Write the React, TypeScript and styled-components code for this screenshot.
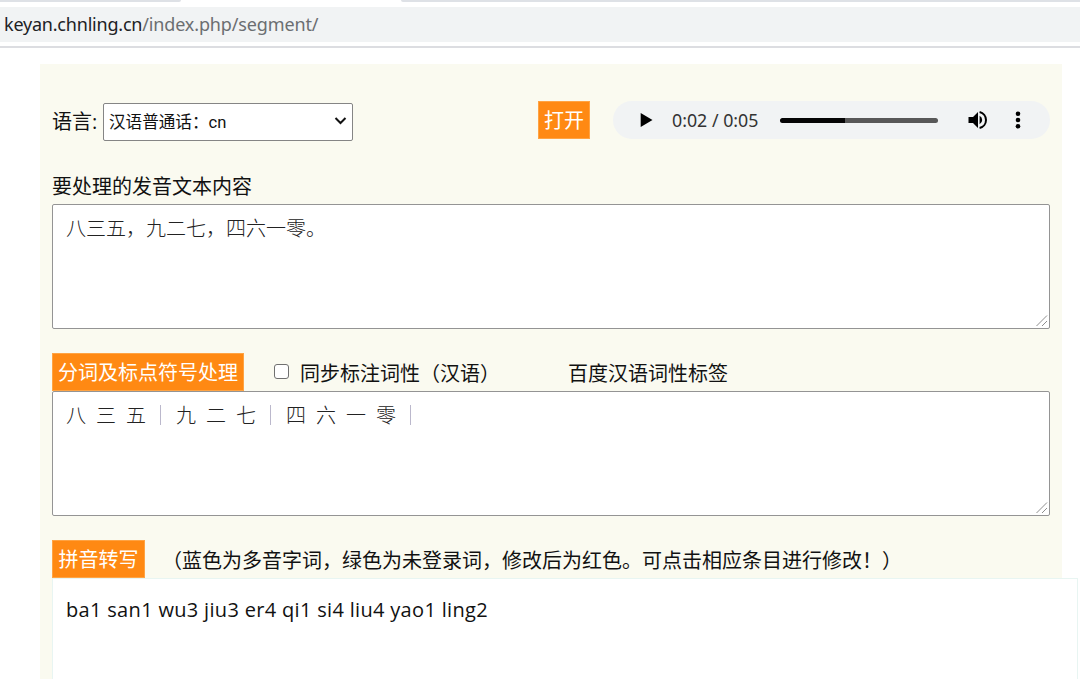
import React from "react";
import styled, { createGlobalStyle } from "styled-components";

const GlobalStyle = createGlobalStyle`
  * {
    box-sizing: border-box;
  }
  body {
    margin: 0;
    background: #fff;
    overflow: hidden;
    color: #111;
    font-family: "Open Sans", "Noto Sans CJK SC", sans-serif;
    font-size: 20px;
  }
`;

const Page = styled.div`
  width: 1080px;
  height: 679px;
  overflow: hidden;
`;

const TabStrip = styled.div`
  display: flex;
  justify-content: space-between;
  height: 7px;
`;

const TabEdge = styled.div<{ $width: number; $side: "left" | "right" }>`
  width: ${(p) => p.$width}px;
  height: 2px;
  background: #dee1e6;
  border-radius: ${(p) => (p.$side === "left" ? "0 0 3px 0" : "0 0 0 3px")};
`;

const AddressBar = styled.div`
  height: 35px;
  padding-left: 4px;
  background: #f1f3f4;
  color: #6b6e71;
  font-family: "Noto Sans", sans-serif;
  font-size: 18px;
  line-height: 34px;
  letter-spacing: -0.14px;
  white-space: nowrap;
`;

const Host = styled.span`
  color: #202124;
  letter-spacing: -0.21px;
`;

const Divider = styled.div`
  height: 6px;
  border-bottom: 2px solid #dcdde1;
  margin-bottom: 16px;
`;

const Panel = styled.main`
  width: 1022px;
  height: 615px;
  margin-left: 40px;
  padding: 37px 12px 0;
  background: #fafaf0;
`;

const Controls = styled.div`
  display: flex;
  align-items: center;
  height: 38px;
`;

const Label = styled.label`
  width: 51px;
  padding-top: 3px;
  line-height: 38px;
  white-space: nowrap;
`;

const LanguageSelect = styled.div`
  display: flex;
  align-items: center;
  justify-content: space-between;
  width: 250px;
  height: 38px;
  margin-top: 4px;
  padding: 0 5px 2px;
  border: 1px solid #858585;
  border-radius: 2px;
  background: #fff;
  font-family: Roboto, "Noto Sans CJK SC", sans-serif;
  font-size: 16.6px;
`;

const OrangeButton = styled.button<{ $width: number }>`
  width: ${(p) => p.$width}px;
  height: 38px;
  padding: 2px 0 0;
  border: 1px solid #ffa343;
  background: #ff8913;
  color: #fff;
  font: inherit;
  line-height: 34px;
  white-space: nowrap;
`;

const OpenButton = styled(OrangeButton)`
  margin-left: auto;
`;

const Player = styled.div`
  display: flex;
  align-items: center;
  width: 437px;
  height: 38px;
  margin-left: 23px;
  padding-left: 27px;
  border-radius: 19px;
  background: #f1f3f4;
`;

const Time = styled.span`
  width: 108px;
  margin-left: 19px;
  color: #333;
  font-family: "Noto Sans", sans-serif;
  font-size: 17.8px;
  white-space: nowrap;
`;

const Track = styled.div`
  width: 158px;
  height: 5px;
  border-radius: 3px;
  background: #585858;
  overflow: hidden;
`;

const Played = styled.div`
  height: 5px;
  border-radius: 3px 0 0 3px;
  background: #050505;
`;

const VolumeIcon = styled.svg`
  margin-left: 30px;
`;

const MoreIcon = styled.svg`
  margin-left: 27px;
`;

const Caption = styled.div`
  height: 37px;
  margin-top: 28px;
  padding-top: 1px;
  line-height: 37px;
`;

const TextBox = styled.div`
  position: relative;
  width: 998px;
  height: 125px;
  padding: 8px 13px;
  border: 1px solid #949494;
  border-radius: 2px;
  background: #fff;
  color: #222;
  font-family: "Noto Sans CJK SC", sans-serif;
  font-weight: 300;
  line-height: 30px;
  white-space: pre;
`;

const Grip = styled.svg`
  position: absolute;
  right: 1px;
  bottom: 1px;
`;

const Tokens = styled.div`
  display: flex;
  align-items: center;
  height: 30px;
  gap: 10px;
`;

const Bar = styled.span`
  width: 1px;
  height: 20px;
  margin: 0 5px 0 4px;
  background: #bbb8cc;
`;

const Row = styled.div`
  display: flex;
  align-items: center;
  height: 39px;
  margin-top: 23px;
  white-space: nowrap;
`;

const Checkbox = styled.span`
  width: 15px;
  height: 15px;
  margin: 0 11px 1px 30px;
  border: 1px solid #707070;
  border-radius: 3px;
  background: #fff;
`;

const RowText = styled.span<{ $gap?: number }>`
  margin-left: ${(p) => p.$gap ?? 0}px;
  padding-top: 2px;
`;

const Result = styled.div`
  width: 1026px;
  height: 110px;
  padding: 14px 13px;
  border: 1px solid #e8f5f2;
  background: #fff;
  color: #111;
  font-family: "Open Sans", sans-serif;
  font-size: 20px;
  line-height: 34px;
  letter-spacing: 0.32px;
  white-space: nowrap;
`;

const ResizeGrip = () => (
  <Grip width="12" height="12" viewBox="0 0 12 12" stroke="#8e8e8e" strokeWidth="1">
    <path d="M0.5 11L11 0.5M6 11L11 6" />
  </Grip>
);

const segments = ["八三五", "九二七", "四六一零"];

export default function App() {
  return (
    <Page>
      <GlobalStyle />
      <TabStrip>
        <TabEdge $width={181} $side="left" />
        <TabEdge $width={679} $side="right" />
      </TabStrip>
      <AddressBar>
        <Host>keyan.chnling.cn</Host>/index.php/segment/
      </AddressBar>
      <Divider />
      <Panel>
        <Controls>
          <Label>语言:</Label>
          <LanguageSelect>
            <span>汉语普通话：cn</span>
            <svg width="13" height="10" viewBox="0 0 13 10" fill="none" stroke="#111" strokeWidth="2">
              <path d="M1.5 2L6.5 7L11.5 2" />
            </svg>
          </LanguageSelect>
          <OpenButton $width={52}>打开</OpenButton>
          <Player>
            <svg width="13" height="16" viewBox="0 0 13 16">
              <path d="M0.7 1L12.5 8L0.7 15Z" />
            </svg>
            <Time>0:02 / 0:05</Time>
            <Track>
              <Played style={{ width: "41%" }} />
            </Track>
            <VolumeIcon width="20" height="20" viewBox="0 0 20 20">
              <path d="M0.5 7H5L10 2V18L5 13H0.5Z" />
              <path d="M11.6 5.8A4.7 4.7 0 0 1 11.6 14.2Z" />
              <path d="M11.6 2A8.2 8.2 0 0 1 11.6 18" fill="none" stroke="#000" strokeWidth="2" />
            </VolumeIcon>
            <MoreIcon width="6" height="18" viewBox="0 0 6 18">
              <circle cx="3" cy="2.7" r="2.3" />
              <circle cx="3" cy="9" r="2.3" />
              <circle cx="3" cy="15.3" r="2.3" />
            </MoreIcon>
          </Player>
        </Controls>

        <Caption>要处理的发音文本内容</Caption>
        <TextBox>
          八三五，九二七，四六一零。
          <ResizeGrip />
        </TextBox>

        <Row>
          <OrangeButton $width={192}>分词及标点符号处理</OrangeButton>
          <Checkbox />
          <RowText>同步标注词性（汉语）</RowText>
          <RowText $gap={68}>百度汉语词性标签</RowText>
        </Row>
        <TextBox>
          <Tokens>
            {segments.map((segment) => (
              <React.Fragment key={segment}>
                {segment.split("").map((char) => (
                  <span key={char}>{char}</span>
                ))}
                <Bar />
              </React.Fragment>
            ))}
          </Tokens>
          <ResizeGrip />
        </TextBox>

        <Row>
          <OrangeButton $width={93}>拼音转写</OrangeButton>
          <RowText $gap={17}>
            （蓝色为多音字词，绿色为未登录词，修改后为红色。可点击相应条目进行修改！）
          </RowText>
        </Row>
        <Result>ba1 san1 wu3 jiu3 er4 qi1 si4 liu4 yao1 ling2</Result>
      </Panel>
    </Page>
  );
}
